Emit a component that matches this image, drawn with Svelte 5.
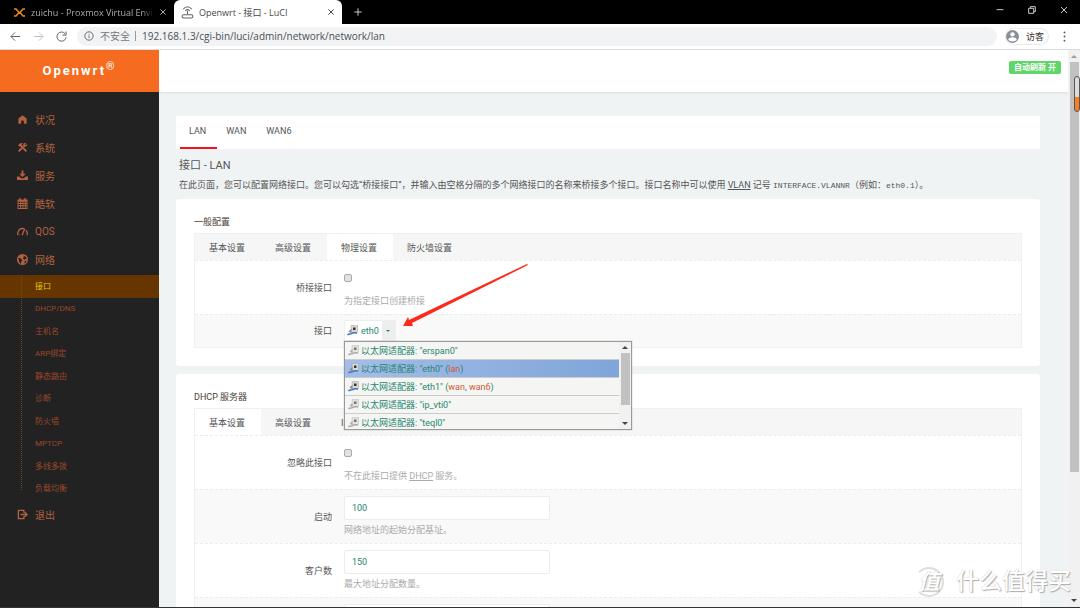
<script lang="ts">
	type Icon = { d: string; line?: boolean };
	type Device = { name: string; nets: string[] };

	const icons: Record<string, Icon> = {
		home: { d: 'M12 3Q11 3 3 10v11h6v-5q3-5 6 0v5h6V10Q13 3 12 3z' },
		tools: {
			d: 'M2 7l6-5 5 1-3 3 12 13-3 3L7 9 5 10zM22 4l-3 3-2-2 3-3c-4-1-7 1-6 5l-2 2 3 3 2-2c4 1 6-2 5-6zM9 12l3 3-7 7-3-3z'
		},
		download: { d: 'M10 1h4v7h5l-7 7-7-7h5zM0 14h5l4 4h6l4-4h5v8H0z' },
		calendar: {
			d: 'M5 0h3v3h8V0h3v3h4v21H1V3h4zM3 8v3h4V8zm6 0v3h3V8zm5 0v3h3V8zm5 0v3h2V8zM3 13v3h4v-3zm6 0v3h3v-3zm5 0v3h3v-3zm5 0v3h2v-3zM3 18v4h4v-4zm6 0v4h3v-4zm5 0v4h3v-4zm5 0v4h2v-4z'
		},
		gauge: { d: 'M2 20C0 9 8 4 15 6M20 9c2 3 3 7 2 11M11 20 17 6M5 20h1', line: true },
		globe: {
			d: 'M12 0a12 12 0 1 0 0 24 12 12 0 0 0 0-24zM14 3l5 3 3 5-3-1-2 3-4-3 2-4zM3 8l5 1 4 5-3 3v5l-4-4zM20 14l1 2-4 5-1-4z'
		},
		logout: { d: 'M15 8V3H3v18h12v-5M8 12h13M17 7l5 5-5 5', line: true }
	};

	const menu = [
		{ label: '状况', icon: 'home' },
		{ label: '系统', icon: 'tools' },
		{ label: '服务', icon: 'download' },
		{ label: '酷软', icon: 'calendar' },
		{ label: 'QOS', icon: 'gauge' },
		{
			label: '网络',
			icon: 'globe',
			children: ['接口', 'DHCP/DNS', '主机名', 'ARP绑定', '静态路由', '诊断', '防火墙', 'MPTCP', '多线多拨', '负载均衡']
		},
		{ label: '退出', icon: 'logout' }
	];

	const nets = ['LAN', 'WAN', 'WAN6'];
	const commonTabs = ['基本设置', '高级设置', '物理设置', '防火墙设置'];
	const dhcpTabs = ['基本设置', '高级设置', 'IPv6 设置'];

	const devices: Device[] = [
		{ name: 'erspan0', nets: [] },
		{ name: 'eth0', nets: ['lan'] },
		{ name: 'eth1', nets: ['wan', 'wan6'] },
		{ name: 'ip_vti0', nets: [] },
		{ name: 'teql0', nets: [] }
	];

	let commonTab = $state('物理设置');
	let dhcpTab = $state('基本设置');
	let device = $state('eth0');
	let open = $state(true);
	let url = $state('192.168.1.3/cgi-bin/luci/admin/network/network/lan');
	let start = $state('100');
	let limit = $state('150');
	let lease = $state('12h');

	function pick(name: string) {
		device = name;
		open = false;
	}
</script>

{#snippet stroke(d: string, cls: string)}
	<svg class={cls} viewBox="0 0 24 24" fill="none" stroke="currentColor" stroke-width="2" aria-hidden="true"><path {d} /></svg>
{/snippet}

{#snippet adapter(used: boolean)}
	<svg class="adapter" viewBox="0 0 22 22" aria-hidden="true">
		<path d="M8 1h13v14H9z" fill={used ? '#d9d9d2' : '#e2e2df'} stroke={used ? '#a3a39c' : '#bbb'} />
		<path d="M12 5h5v5h-5z" fill={used ? '#333' : '#777'} />
		<path d="M3 13l6-6v10z" fill={used ? '#8d8d88' : '#b5b5b2'} />
		<path d="M1 20c3-4 5 0 9-3s6-1 10-1" fill="none" stroke={used ? '#3f74c4' : '#aaa'} stroke-width="3" />
	</svg>
{/snippet}

{#snippet tabs(items: string[], current: string, choose: (t: string) => void)}
	<div class="tabs" role="tablist">
		{#each items as t}
			<button role="tab" aria-selected={t === current} class:active={t === current} onclick={() => choose(t)}>{t}</button>
		{/each}
	</div>
{/snippet}

<div class="window">
	<header class="strip">
		<div class="tab">
			<svg class="fav" viewBox="0 0 26 20" aria-hidden="true">
				<path d="M2 3h4l6 7-6 7H2M24 3h-4l-6 7 6 7h4" fill="none" stroke="#f08a1d" stroke-width="3" />
			</svg>
			<span class="title fade">zuichu - Proxmox Virtual Environment</span>
			<button aria-label="关闭标签页">{@render stroke('M4 4l16 16M20 4 4 20', 'x')}</button>
		</div>
		<div class="tab current">
			<svg class="fav" viewBox="0 0 24 24" fill="none" stroke="#666" stroke-width="2" aria-hidden="true">
				<path d="M4 6c5-6 11-6 16 0M8 9c3-3 5-3 8 0M12 9v6" />
				<rect x="2" y="16" width="20" height="6" rx="3" />
			</svg>
			<span class="title">Openwrt - 接口 - LuCI</span>
			<button aria-label="关闭标签页">{@render stroke('M4 4l16 16M20 4 4 20', 'x')}</button>
		</div>
		<button class="plus" aria-label="新标签页">{@render stroke('M12 1v22M1 12h22', 'x')}</button>
		<div class="controls">
			<button aria-label="最小化">{@render stroke('M2 11h20', 'x')}</button>
			<button aria-label="还原">{@render stroke('M2 7h15v15H2zM7 7V2h15v15h-5', 'x')}</button>
			<button aria-label="关闭">{@render stroke('M3 3l18 18M21 3 3 21', 'x')}</button>
		</div>
	</header>

	<nav class="toolbar" aria-label="浏览器">
		<button aria-label="后退">{@render stroke('M22 12H3M11 3l-9 9 9 9', 'nav')}</button>
		<button aria-label="前进" class="off">{@render stroke('M2 12h19M13 3l9 9-9 9', 'nav')}</button>
		<button aria-label="刷新">{@render stroke('M20 6a10 10 0 1 0 2 8M22 1v8h-8', 'nav')}</button>
		<label class="omnibox">
			{@render stroke('M12 2a10 10 0 1 0 0 20 10 10 0 0 0 0-20M12 11v6M12 7v2', 'info')}
			<span class="insecure">不安全</span>
			<input type="text" bind:value={url} />
		</label>
		<button class="guest">
			<svg viewBox="0 0 24 24" aria-hidden="true">
				<circle cx="12" cy="12" r="12" fill="#8a9097" />
				<circle cx="12" cy="8" r="4" fill="#fff" />
				<path d="M4 18c2-6 14-6 16 0-4 4-12 4-16 0z" fill="#fff" />
			</svg>
			访客
		</button>
		<button aria-label="更多">
			<svg class="nav" viewBox="0 0 24 24" fill="currentColor" aria-hidden="true">
				<circle cx="12" cy="3" r="2" /><circle cx="12" cy="12" r="2" /><circle cx="12" cy="21" r="2" />
			</svg>
		</button>
	</nav>

	<div class="page">
		<aside>
			<a class="brand" href="#home">Openwrt<sup>®</sup></a>
			<ul class="menu">
				{#each menu as item}
					<li>
						<a href="#{item.icon}">
							<svg viewBox="0 0 24 24" aria-hidden="true">
								<path class:line={icons[item.icon].line} fill-rule="evenodd" d={icons[item.icon].d} />
							</svg>
							{item.label}
						</a>
						{#if item.children}
							<ul class="sub">
								{#each item.children as child, i}
									<li class:active={i === 0}><a href="#{item.icon}-{i}">{child}</a></li>
								{/each}
							</ul>
						{/if}
					</li>
				{/each}
			</ul>
		</aside>

		<main>
			<div class="topbar"><button>自动刷新 开</button></div>
			<div class="content">
				<nav class="nets">
					{#each nets as n, i}
						<a href="#{n}" class:active={i === 0}>{n}</a>
					{/each}
				</nav>
				<h2>接口 - LAN</h2>
				<p class="descr">
					在此页面，您可以配置网络接口。您可以勾选“桥接接口”，并输入由空格分隔的多个网络接口的名称来桥接多个接口。接口名称中可以使用
					<abbr>VLAN</abbr> 记号 <code>INTERFACE.VLANNR</code>（例如：<code>eth0.1</code>）。
				</p>

				<section>
					<h3>一般配置</h3>
					<div class="box">
						{@render tabs(commonTabs, commonTab, (t) => (commonTab = t))}
						<div class="row">
							<label for="bridge">桥接接口</label>
							<div class="field">
								<div class="check"><input id="bridge" type="checkbox" /></div>
								<small>为指定接口创建桥接</small>
							</div>
						</div>
						<div class="row alt short">
							<label for="ifname">接口</label>
							<div class="field">
								<button id="ifname" class="dropdown" aria-haspopup="listbox" aria-expanded={open} onclick={() => (open = !open)}>
									<span class="value">{@render adapter(true)}{device}</span>
									<span class="caret"></span>
								</button>
								{#if open}
									<div class="popup">
										<div class="options" role="listbox" aria-label="接口">
											{#each devices as d (d.name)}
												<button role="option" aria-selected={d.name === device} class:selected={d.name === device} onclick={() => pick(d.name)}>
													{@render adapter(d.nets.length > 0)}
													<span>以太网适配器: "{d.name}"{#if d.nets.length}&nbsp;({#each d.nets as n, i}{i ? ', ' : ''}<em>{n}</em>{/each}){/if}</span>
												</button>
											{/each}
										</div>
										<div class="bar small"><i class="up"></i><div class="thumb"></div><i class="down"></i></div>
									</div>
								{/if}
								<svg class="pointer" viewBox="0 0 126 63" aria-hidden="true">
									<path d="M0 62 5 53l1 3L124 0l1 1L9 59l1 3z" fill="#fb2a1c" />
								</svg>
							</div>
						</div>
					</div>
				</section>

				<section>
					<h3>DHCP 服务器</h3>
					<div class="box">
						{@render tabs(dhcpTabs, dhcpTab, (t) => (dhcpTab = t))}
						<div class="row">
							<label for="ignore">忽略此接口</label>
							<div class="field">
								<div class="check"><input id="ignore" type="checkbox" /></div>
								<small>不在此接口提供 <abbr>DHCP</abbr> 服务。</small>
							</div>
						</div>
						<div class="row alt">
							<label for="start">启动</label>
							<div class="field">
								<input id="start" type="text" bind:value={start} />
								<small>网络地址的起始分配基址。</small>
							</div>
						</div>
						<div class="row">
							<label for="limit">客户数</label>
							<div class="field">
								<input id="limit" type="text" bind:value={limit} />
								<small>最大地址分配数量。</small>
							</div>
						</div>
						<div class="row alt">
							<label for="lease">租用时间</label>
							<div class="field">
								<input id="lease" type="text" bind:value={lease} />
								<small>地址租期，最小 2 分钟。</small>
							</div>
						</div>
					</div>
				</section>
			</div>
		</main>

		<div class="bar"><i class="up"></i><div class="thumb"></div><i class="down"></i></div>
		<div class="meter"></div>
		<div class="watermark"><b>值</b>什么值得买</div>
	</div>
</div>

<style>
	:global(body) {
		margin: 0;
	}
	.window {
		display: flex;
		flex-direction: column;
		box-sizing: border-box;
		height: 100vh;
		overflow: hidden;
		border-bottom: 1px solid #333;
		font-family: Roboto, 'Noto Sans CJK SC', sans-serif;
		font-size: 9px;
		color: #555;
	}
	button {
		padding: 0;
		border: 0;
		background: none;
		font: inherit;
		color: inherit;
		cursor: pointer;
	}
	ul {
		margin: 0;
		padding: 0;
		list-style: none;
	}
	a {
		color: inherit;
		text-decoration: none;
	}

	/* browser */
	.strip {
		display: flex;
		flex: none;
		height: 24px;
		background: #000;
		color: #ccc;
		font-family: 'Open Sans', 'Noto Sans CJK SC', sans-serif;
	}
	.strip button {
		display: flex;
		align-items: center;
		justify-content: center;
	}
	.tab {
		display: flex;
		align-items: center;
		gap: 5px;
		box-sizing: border-box;
		width: 174px;
		padding: 0 7px 0 13px;
		color: #aaa;
	}
	.tab.current {
		width: 168px;
		padding: 0 7px 0 7px;
		border-radius: 6px 6px 0 0;
		background: #fff;
		color: #45484c;
	}
	.fav {
		flex: none;
		width: 13px;
		height: 13px;
	}
	.title {
		flex: 1;
		overflow: hidden;
		white-space: nowrap;
	}
	.fade {
		mask-image: linear-gradient(to right, #000 90%, transparent);
	}
	.x {
		width: 8px;
		height: 8px;
		stroke-width: 3;
	}
	.plus {
		width: 32px;
	}
	.controls {
		display: flex;
		margin-left: auto;
	}
	.controls button {
		width: 32px;
		padding-bottom: 4px;
	}
	.toolbar {
		display: flex;
		align-items: center;
		flex: none;
		gap: 9px;
		box-sizing: border-box;
		height: 26px;
		padding: 0 9px 1px 8px;
		border-bottom: 1px solid #d9dbde;
		background: #fff;
		color: #50545a;
	}
	.toolbar button {
		display: flex;
		align-items: center;
		justify-content: center;
		min-width: 14px;
	}
	.toolbar .off {
		color: #bbb;
	}
	.nav {
		width: 11px;
		height: 11px;
	}
	.omnibox {
		display: flex;
		align-items: center;
		flex: 1;
		gap: 6px;
		height: 19px;
		padding-left: 7px;
		border-radius: 10px;
		background: #f1f3f4;
		font-family: 'Open Sans', 'Noto Sans CJK SC', sans-serif;
	}
	.info {
		width: 10px;
		height: 10px;
	}
	.insecure {
		padding-right: 5px;
		border-right: 1px solid #999;
		font-size: 10px;
		line-height: 10px;
		color: #74787d;
	}
	.omnibox input {
		flex: 1;
		padding: 0;
		border: 0;
		outline: 0;
		background: none;
		font: inherit;
		font-size: 10px;
		color: #4c5055;
	}
	.toolbar .guest {
		gap: 7px;
		height: 15px;
		padding-right: 4px;
		border-radius: 8px;
		box-shadow: 0 0 0 1px #e8eaed;
		color: #333;
	}
	.guest svg {
		width: 13px;
		height: 13px;
	}

	/* page */
	.page {
		position: relative;
		display: flex;
		flex: 1;
		min-height: 0;
		background: #eff3f4;
	}
	aside {
		flex: none;
		width: 159px;
		background: #222;
		color: #b2623f;
	}
	.brand {
		display: block;
		height: 42px;
		background: #f56c20;
		color: #fff;
		font-size: 13px;
		font-weight: 700;
		letter-spacing: 2px;
		line-height: 42px;
		text-align: center;
	}
	.brand sup {
		font-weight: 400;
		line-height: 0;
	}
	.menu {
		padding-top: 13px;
		font-size: 10px;
	}
	.menu > li > a {
		display: flex;
		align-items: center;
		gap: 7px;
		height: 28px;
		padding-left: 17px;
	}
	.menu svg {
		width: 11px;
		height: 11px;
		fill: currentColor;
	}
	.menu .line {
		fill: none;
		stroke: currentColor;
		stroke-width: 3;
	}
	.sub {
		position: relative;
		margin-top: 2px;
		font-size: 8px;
		color: #9c472a;
	}
	.sub::before {
		content: '';
		position: absolute;
		top: 0;
		bottom: 10px;
		left: 21px;
		border-left: 1px dotted #7a4716;
	}
	.sub a {
		display: block;
		padding-left: 35px;
		line-height: 22px;
	}
	.sub li:nth-child(odd) a {
		line-height: 23px;
	}
	.sub .active {
		background: #663500;
		color: #e6c700;
	}

	main {
		flex: 1;
		min-width: 0;
		overflow: hidden;
	}
	.topbar {
		display: flex;
		justify-content: flex-end;
		box-sizing: border-box;
		height: 42px;
		padding: 11px 7px 0 0;
		background: #fff;
		box-shadow: 0 1px 2px #d9dede;
	}
	.topbar button {
		height: 13px;
		padding: 0 5px;
		border-radius: 2px;
		background: #5fd668;
		color: #fff;
		font-size: 8px;
		font-weight: 700;
		line-height: 13px;
	}
	.content {
		padding: 24px 28px 0 17px;
	}
	.nets {
		display: flex;
		height: 33px;
		padding-left: 4px;
		background: #fff;
		line-height: 30px;
	}
	.nets a {
		padding: 0 11px 0 9px;
		box-sizing: border-box;
	}
	.nets .active {
		border-bottom: 2px solid #f5121c;
	}
	h2 {
		margin: 9px 3px 0;
		font-size: 11px;
		font-weight: 400;
		line-height: 16px;
	}
	.descr {
		margin: 4px 3px 6px;
		line-height: 14px;
	}
	code {
		font-family: 'Liberation Mono', monospace;
		font-size: 8px;
	}
	abbr {
		text-decoration: underline;
	}
	section {
		margin-bottom: 8px;
		padding: 16px 18px 18px;
		border-radius: 3px;
		background: #fff;
	}
	h3 {
		margin: 0 0 4px;
		font-size: 9px;
		font-weight: 400;
		line-height: 14px;
		color: #4d4033;
	}
	.box {
		border: 1px solid #eff1f1;
	}
	.tabs {
		display: flex;
		height: 26px;
		background: #f6f6f6;
	}
	.tabs button {
		padding: 0 16px 0 14px;
	}
	.tabs .active {
		background: #fff;
	}
	.row {
		display: flex;
		align-items: center;
		gap: 12px;
		padding: 6px 0 7px;
		border-top: 1px dashed #ececec;
	}
	.short {
		padding: 5px 0 6px;
	}
	.alt {
		background: #f9f9f9;
	}
	.row label {
		width: 137px;
		text-align: right;
	}
	.field {
		position: relative;
		display: flex;
		flex: 1;
		flex-direction: column;
		align-items: flex-start;
		gap: 4px;
	}
	.field small {
		font-size: 9px;
		line-height: 12px;
		color: #aaa;
	}
	.field input[type='text'] {
		box-sizing: border-box;
		width: 206px;
		height: 24px;
		padding: 0 7px;
		border: 1px solid #e9eded;
		border-radius: 2px;
		background: #fff;
		font: inherit;
		color: #1f8570;
	}
	.check {
		display: flex;
		align-items: center;
		height: 22px;
		padding-bottom: 2px;
	}
	.check input {
		width: 8px;
		height: 8px;
		margin: 0;
		appearance: none;
		border: 1px solid #aaa;
		border-radius: 2px;
		box-sizing: border-box;
		background: #e2e2e2;
	}
	.dropdown {
		display: flex;
		height: 21px;
		border: 1px solid #eee;
		box-sizing: border-box;
		color: #1f8570;
	}
	.value {
		display: flex;
		align-items: center;
		gap: 3px;
		height: 100%;
		padding: 0 3px 0 2px;
		background: #fff;
	}
	.caret {
		display: flex;
		align-items: center;
		justify-content: center;
		width: 13px;
		height: 100%;
		background: #eee;
	}
	.caret::before {
		content: '';
		border: 2px solid transparent;
		border-top-color: #1f8570;
		border-bottom: 0;
	}
	.adapter {
		flex: none;
		width: 11px;
		height: 11px;
	}
	.popup {
		position: absolute;
		z-index: 2;
		top: 100%;
		left: 0;
		display: flex;
		box-sizing: border-box;
		width: 288px;
		max-height: 89px;
		overflow: hidden;
		border: 1px solid #999;
		background: #f5f5f3;
		box-shadow: 0 0 1px #999;
		color: #1f8570;
	}
	.options {
		flex: 1;
	}
	.options button {
		display: flex;
		align-items: center;
		gap: 2px;
		width: 100%;
		height: 18px;
		padding-left: 3px;
		border-bottom: 1px solid #ccc;
	}
	.options .selected {
		background: linear-gradient(to right, #a3bde8, #7fa5d9);
	}
	em {
		font-style: normal;
		color: #cc5a35;
	}
	.pointer {
		position: absolute;
		z-index: 3;
		top: -56px;
		left: 59px;
		width: 126px;
		height: 63px;
	}

	.bar {
		display: flex;
		flex-direction: column;
		align-items: center;
		box-sizing: border-box;
		flex: none;
		width: 12px;
		padding: 5px 0;
		background: #f1f1f1;
	}
	.bar i {
		border: 3px solid transparent;
	}
	.bar .up {
		border-top: 0;
		border-bottom-color: #999;
	}
	.bar .down {
		margin-top: auto;
		border-bottom: 0;
		border-top-color: #444;
	}
	.bar.small {
		padding: 4px 0;
	}
	.small .up {
		border-bottom-color: #444;
	}
	.thumb {
		width: 9px;
		height: 75%;
		margin-top: 4px;
		background: #c1c1c1;
	}
	.small .thumb {
		height: 52px;
	}
	.meter {
		position: absolute;
		top: 26px;
		right: 0;
		box-sizing: border-box;
		width: 6px;
		height: 36px;
		border: 1px solid #555;
		border-radius: 3px;
		background: linear-gradient(#ddd 58%, #f97f20 58%);
	}
	.watermark {
		position: absolute;
		right: 9px;
		bottom: 10px;
		display: flex;
		align-items: center;
		gap: 12px;
		color: #fff;
		font-size: 23px;
		font-weight: 500;
		line-height: 30px;
		text-shadow: 1px 1px 1px #aaa, 0 0 1px #bbb;
	}
	.watermark b {
		width: 26px;
		border: 2px solid #ddd;
		border-left-color: transparent;
		border-radius: 50%;
		font-size: 21px;
		font-style: italic;
		line-height: 26px;
		text-align: center;
	}
</style>
